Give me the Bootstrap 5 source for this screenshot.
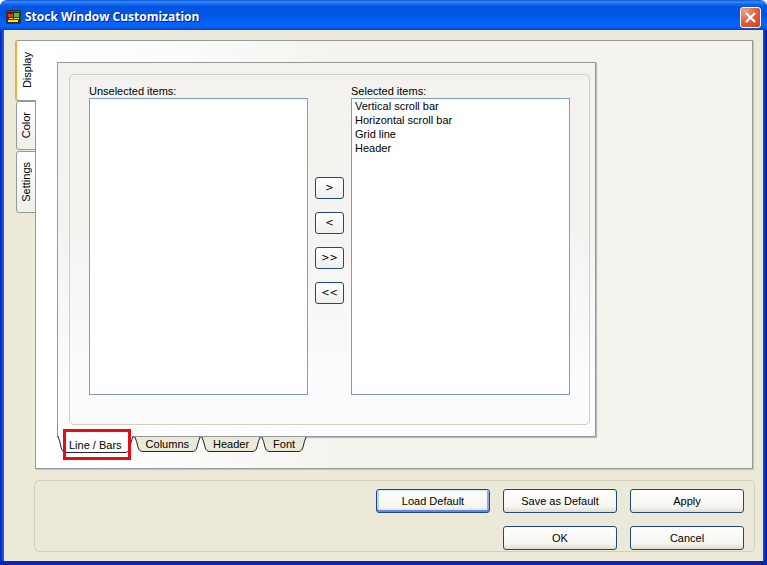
<!DOCTYPE html>
<html lang="en">
<head>
<meta charset="utf-8">
<meta name="viewport" content="width=device-width, initial-scale=1">
<title>Stock Window Customization</title>
<link href="https://cdn.jsdelivr.net/npm/bootstrap@5.3.0/dist/css/bootstrap.min.css" rel="stylesheet">
<style>
  body { font-family: Tahoma, "Liberation Sans", sans-serif; font-size: 11px; line-height: 14px; color: #000; background: #fff; }
  .xp-window { background: linear-gradient(90deg, #0026b8 0, #0831d9 2px, #166aee 3px, #0855dd 4px, transparent 4px, transparent calc(100% - 4px), #0855dd calc(100% - 4px), #0831d9 calc(100% - 2px), #00138c 100%), #ece9d8; border-bottom: 4px solid #0a24b4; border-radius: 7px 7px 0 0; padding: 0 4px; overflow: hidden; }
  .xp-title { height: 30px; margin: 0 -4px; padding: 4px 6px 0 6px; gap: 4px; color: #fff; font: bold 12px/18px "Open Sans", "Noto Sans", sans-serif; text-shadow: 1px 1px #0a1883; background: linear-gradient(#0a56d8 0, #3c8cfb 2px, #1467ee 4px, #0256e4 7px, #0054e3 15px, #0562fb 22px, #0663fd 26px, #0450d8 29px, #0140be 30px); }
  .xp-title h1 { font: inherit; }
  .xp-close { width: 21px; height: 21px; border: 1px solid #fff; border-radius: 3px; background: radial-gradient(circle at 20% 15%, #f0a187, #e0603c 50%, #cc4018); }
  .xp-body { padding: 10px 10px 9px 11px; }
  .side-tabs { width: 21px; }
  .side-tab { width: 20px; margin-left: 1px; border: 1px solid #919b9c; border-radius: 3px 0 0 3px; color: #000; background: linear-gradient(#fff, #f0f0ea); margin-bottom: 1px; }
  .side-tab span { writing-mode: vertical-rl; transform: rotate(180deg); line-height: 16px; }
  .side-tab.active { width: 21px; height: 61px; margin: 0; border-left: 2px solid #f0ae3c; border-right: 0; background: #fff; z-index: 1; }
  .tab-color { height: 49px; }
  .tab-settings { height: 62px; }
  .main-panel { border: 1px solid #919b9c; margin-left: -1px; padding: 21px 21px 15px; background: linear-gradient(90deg, #fff 0, #fcfcfc 130px, #f4f3ee 300px); box-shadow: 1px 1px 1px #c9c6b5; }
  .sub-panel { width: 100%; max-width: 539px; }
  .sub-page { border: 1px solid #919b9c; padding: 11px 5px 11px 11px; background: linear-gradient(#f3f2ee, #f4f3f0 45%, #fcfcfe 85%); box-shadow: 1px 1px 1px #bbb; }
  .xp-group { border: 1px solid #d0d0bf; border-radius: 5px; }
  .lists { padding: 9px 19px 29px 19px; }
  .list-box { border: 1px solid #7f9db9; border-radius: 0; background: #fff; overflow: hidden; padding: 1px; outline: 0; min-height: 120px; color: #000; }
  .list-box option { padding: 0 2px; line-height: 14px; min-height: 14px; }
  .movers { width: 43px; gap: 13px; padding-top: 93px; }
  .xp-btn { border: 1px solid #1d4a7a; border-radius: 3px; color: #000; background: linear-gradient(#fff, #f6f5f0 75%, #dfddd2); padding: 0; }
  .movers .xp-btn { width: 29px; height: 22px; background: linear-gradient(#fff, #eef0ec); font-family: "DejaVu Sans Condensed", "DejaVu Sans", sans-serif; }
  .foot { padding: 8px 10px 1px; margin: 11px -2px 0 19px; }
  .foot-grid { display: grid; grid-template-columns: repeat(3, minmax(0, 114px)); justify-content: end; gap: 13px; }
  .foot .xp-btn { height: 24px; }
  .foot .xp-btn.default { box-shadow: inset 0 1px #cee7ff, inset 0 -2px #6982ee, inset 2px 0 #bcd4f6, inset -2px 0 #89ade4; }
  .page-tab { border: 0; padding: 0; background: none; color: #000; height: 15px; }
  .page-tab svg { width: 10px; height: 100%; flex: none; }
  .page-tab span { height: 100%; padding: 0 2px; border-bottom: 1px solid #222; background: #ece9d8; line-height: 15px; }
  .page-tab path { fill: #ece9d8; stroke: #222; }
  .page-tab.active { margin-top: -1px; height: 17px; }
  .page-tab.active span { background: #fff; line-height: 18px; }
  .page-tab.active path { fill: #fff; }
  .marker { position: absolute; left: 6px; right: 3px; top: -7px; bottom: -7px; border: 3px solid #e01018; pointer-events: none; }
</style>
<script src="https://cdn.jsdelivr.net/npm/bootstrap@5.3.0/dist/js/bootstrap.bundle.min.js"></script>
</head>
<body>
<div class="xp-window d-flex flex-column min-vh-100">
  <header class="xp-title d-flex align-items-center">
    <svg width="15" height="14" viewBox="0 0 15 14" aria-hidden="true"><rect width="15" height="14" rx="1" fill="#2b3138"/><path d="M1 1.500h13" stroke="#35506c"/><path fill="#f03018" d="M2 4h5v3H2z"/><path fill="#48c428" d="M8 3h5v4H8z"/><path fill="#f4dc28" d="M3 8h4v1H3zM8 8h5v1H8zM2 10h5v2H2z"/><path fill="#ece830" d="M7 10h5v2H7z"/></svg>
    <h1 class="m-0 flex-grow-1">Stock Window Customization</h1>
    <button type="button" class="xp-close d-flex align-items-center justify-content-center p-0" aria-label="Close"><svg width="13" height="13" viewBox="0 0 13 13"><path d="M2 2l9 9M11 2l-9 9" stroke="#fff" stroke-width="2.2"/></svg></button>
  </header>
  <main class="xp-body d-flex flex-column flex-grow-1">
    <div class="d-flex flex-grow-1">
      <nav class="side-tabs d-flex flex-column flex-shrink-0" aria-label="Sections">
        <button type="button" class="side-tab active position-relative d-flex align-items-center justify-content-center p-0"><span>Display</span></button>
        <button type="button" class="side-tab tab-color d-flex align-items-center justify-content-center p-0"><span>Color</span></button>
        <button type="button" class="side-tab tab-settings d-flex align-items-center justify-content-center p-0"><span>Settings</span></button>
      </nav>
      <section class="main-panel flex-grow-1 d-flex flex-column">
        <div class="sub-panel d-flex flex-column flex-grow-1">
          <div class="sub-page d-flex flex-grow-1">
            <div class="xp-group lists d-flex flex-grow-1">
              <div class="d-flex flex-column flex-fill w-50">
                <label for="unselected">Unselected items:</label>
                <select id="unselected" class="list-box flex-grow-1 w-100" multiple></select>
              </div>
              <div class="movers d-flex flex-column align-items-center flex-shrink-0">
                <button type="button" class="xp-btn">&gt;</button>
                <button type="button" class="xp-btn">&lt;</button>
                <button type="button" class="xp-btn">&gt;&gt;</button>
                <button type="button" class="xp-btn">&lt;&lt;</button>
              </div>
              <div class="d-flex flex-column flex-fill w-50">
                <label for="selected">Selected items:</label>
                <select id="selected" class="list-box flex-grow-1 w-100" multiple>
                  <option>Vertical scroll bar</option>
                  <option>Horizontal scroll bar</option>
                  <option>Grid line</option>
                  <option>Header</option>
                </select>
              </div>
            </div>
          </div>
          <nav class="page-tabs d-flex align-items-start" aria-label="Display pages">
            <button type="button" class="page-tab active d-flex position-relative"><svg viewBox="0 0 10 17"><path d="M.5-1Q3 5 4 11Q5 16.500 9 16.500H12V-2"/></svg><span>Line / Bars</span><svg viewBox="0 0 10 17"><path d="M9.500-1Q7 5 6 11Q5 16.500 1 16.500H-2V-2"/></svg><i class="marker"></i></button>
            <button type="button" class="page-tab d-flex"><svg viewBox="0 0 10 15"><path d="M.5-1Q3 5 4 10Q5 14.500 9 14.500H12V-2"/></svg><span>Columns</span><svg viewBox="0 0 10 15"><path d="M9.500-1Q7 5 6 10Q5 14.500 1 14.500H-2V-2"/></svg></button>
            <button type="button" class="page-tab d-flex"><svg viewBox="0 0 10 15"><path d="M.5-1Q3 5 4 10Q5 14.500 9 14.500H12V-2"/></svg><span>Header</span><svg viewBox="0 0 10 15"><path d="M9.500-1Q7 5 6 10Q5 14.500 1 14.500H-2V-2"/></svg></button>
            <button type="button" class="page-tab d-flex"><svg viewBox="0 0 10 15"><path d="M.5-1Q3 5 4 10Q5 14.500 9 14.500H12V-2"/></svg><span>Font</span><svg viewBox="0 0 10 15"><path d="M9.500-1Q7 5 6 10Q5 14.500 1 14.500H-2V-2"/></svg></button>
          </nav>
        </div>
      </section>
    </div>
    <footer class="xp-group foot">
      <div class="foot-grid">
        <button type="button" class="xp-btn default">Load Default</button>
        <button type="button" class="xp-btn">Save as Default</button>
        <button type="button" class="xp-btn">Apply</button>
        <span></span>
        <button type="button" class="xp-btn">OK</button>
        <button type="button" class="xp-btn">Cancel</button>
      </div>
    </footer>
  </main>
</div>
</body>
</html>
